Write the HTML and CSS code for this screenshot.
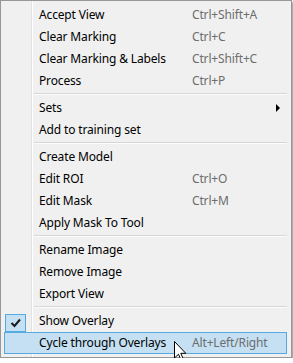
FILE: index.html
```html
<!DOCTYPE html>
<html lang="en">
<head>
  <meta charset="UTF-8">
  <title>Context Menu</title>
  <link rel="stylesheet" href="styles.css">
</head>
<body>

  <div class="menu">
    <div class="item"><span class="label">Accept View</span><span class="key">Ctrl+Shift+A</span></div>
    <div class="item"><span class="label">Clear Marking</span><span class="key">Ctrl+C</span></div>
    <div class="item"><span class="label">Clear Marking &amp; Labels</span><span class="key">Ctrl+Shift+C</span></div>
    <div class="item"><span class="label">Process</span><span class="key">Ctrl+P</span></div>
    <div class="sep"></div>
    <div class="item"><span class="label">Sets</span><span class="key"></span><span class="arrow"></span></div>
    <div class="item"><span class="label">Add to training set</span></div>
    <div class="sep"></div>
    <div class="item"><span class="label">Create Model</span></div>
    <div class="item"><span class="label">Edit ROI</span><span class="key">Ctrl+O</span></div>
    <div class="item"><span class="label">Edit Mask</span><span class="key">Ctrl+M</span></div>
    <div class="item"><span class="label">Apply Mask To Tool</span></div>
    <div class="sep"></div>
    <div class="item"><span class="label">Rename Image</span></div>
    <div class="item"><span class="label">Remove Image</span></div>
    <div class="item"><span class="label">Export View</span></div>
    <div class="sep"></div>
    <div class="item checked">
      <span class="check">
        <svg width="12" height="10" viewBox="0 0 12 10"><path d="M1.5 5 L4.5 8 L10 1.5" fill="none" stroke="#1a1a1a" stroke-width="2"/></svg>
      </span>
      <span class="label">Show Overlay</span>
    </div>
    <div class="item hover"><span class="label">Cycle through Overlays</span><span class="key">Alt+Left/Right</span></div>

    <!-- mouse pointer -->
    <svg class="cursor" width="13" height="21" viewBox="0 0 13 21">
      <path d="M0.5 0.5 V17 L4.5 13.2 L7.3 19.8 L9.6 18.8 L6.8 12.3 H11.8 Z" fill="#fff" stroke="#000" stroke-width="1"/>
    </svg>
  </div>

</body>
</html>
```

FILE: styles.css
```css
body {
  margin: 0;
  background: #ffffff;
  font-family: 'Noto Sans', 'Open Sans', sans-serif;
  font-size: 12px;
  letter-spacing: -0.15px;
  color: #000;
}

.menu {
  position: relative;
  width: 283px;
  padding: 3px 4px 3px 3px;
  border: 1px solid #979797;
  background: linear-gradient(to right, #f0f0f0 30px, #e2e2e2 30px 31px, #ffffff 31px 32px, #f0f0f0 32px);
  box-shadow: 2px 2px 2px rgba(0, 0, 0, 0.35);
}

.item {
  display: flex;
  align-items: center;
  height: 20px;
  border: 1px solid transparent;
  padding-left: 34px;
  position: relative;
  line-height: 20px;
}

.item .label {
  width: 153px;
  white-space: nowrap;
}

.item .key {
  flex: 1;
  color: #6d6d6d;
  white-space: nowrap;
}

.item .arrow {
  width: 0;
  height: 0;
  border-top: 4px solid transparent;
  border-bottom: 4px solid transparent;
  border-left: 4px solid #000;
  margin-right: 6px;
}

.item.hover {
  background: #c4e0f2;
  border-color: #58a9e0;
}

.check {
  position: absolute;
  left: 0;
  top: 3px;
  width: 19px;
  height: 16px;
  background: #c4e0f2;
  border: 1px solid #58a9e0;
  display: flex;
  align-items: center;
  justify-content: center;
}

.sep {
  height: 5px;
  margin-left: 30px;
  box-sizing: border-box;
  padding-top: 1px;
}

.sep::before {
  content: "";
  display: block;
  height: 1px;
  background: #d7d7d7;
  border-bottom: 1px solid #fcfcfc;
}

.cursor {
  position: absolute;
  left: 173px;
  top: 340px;
}
```
